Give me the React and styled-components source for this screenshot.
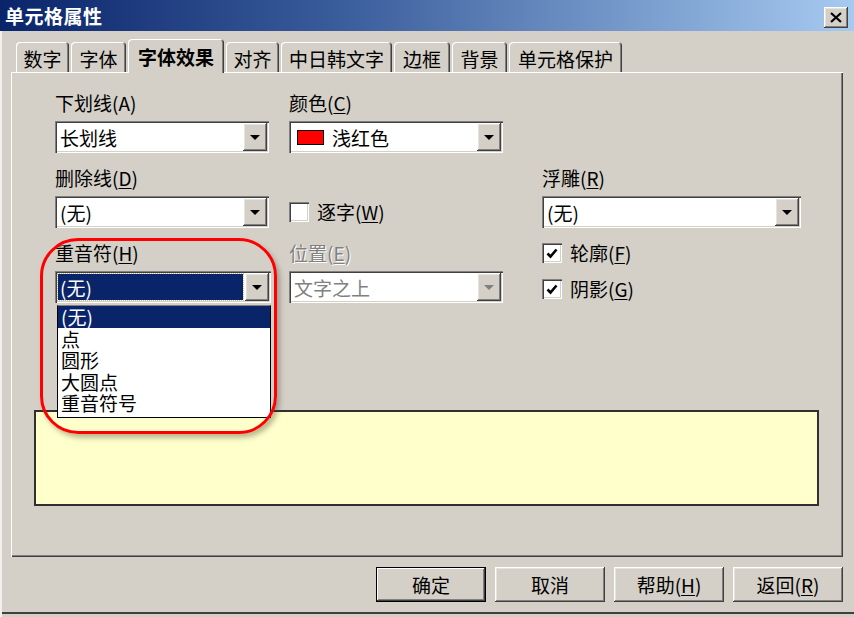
import React from "react";
import styled, { createGlobalStyle } from "styled-components";

const GlobalStyle = createGlobalStyle`
  html, body {
    margin: 0;
    padding: 0;
    background: #d4d0c8;
  }
`;

const FONT = `"Noto Sans CJK SC", "Liberation Sans", sans-serif`;

const raised = `
  box-shadow: inset -1px -1px 0 #404040, inset 1px 1px 0 #ffffff,
    inset -2px -2px 0 #808080, inset 2px 2px 0 #e6e3dc;
`;

const Window = styled.div`
  width: 854px;
  height: 617px;
  box-sizing: border-box;
  background: #d4d0c8;
  display: flex;
  flex-direction: column;
  font-family: ${FONT};
  font-size: 19px;
  color: #000;
  overflow: hidden;
  box-shadow: inset 2px 0 0 #f2f0ec, inset 0 -3px 0 #d4d0c8, inset 0 -5px 0 #404040;
`;

const TitleBar = styled.div`
  height: 31px;
  flex: none;
  display: flex;
  align-items: center;
  justify-content: space-between;
  padding: 0 6px 0 5px;
  background: linear-gradient(to right, #0a246a 0%, #3a5d9c 40%, #a6caf0 100%);
`;

const Title = styled.span`
  color: #fff;
  font-weight: bold;
  font-size: 19px;
  line-height: 1;
  letter-spacing: 0.5px;
`;

const CloseButton = styled.div`
  width: 24px;
  height: 21px;
  margin-top: 4px;
  background: #d4d0c8;
  display: flex;
  align-items: center;
  justify-content: center;
  ${raised}
`;

const Body = styled.div`
  flex: 1;
  display: flex;
  flex-direction: column;
  padding: 0 11px;
`;

const TabRow = styled.div`
  margin-top: 8px;
  height: 33px;
  display: flex;
  align-items: flex-end;
  gap: 2px;
  padding-left: 5px;
`;

const Tab = styled.div`
  position: relative;
  z-index: 1;
  width: ${(p) => p.w}px;
  height: ${(p) => (p.active ? 34 : 30)}px;
  margin-bottom: ${(p) => (p.active ? -1 : 0)}px;
  box-sizing: border-box;
  background: #d4d0c8;
  border-radius: 4px 4px 0 0;
  box-shadow: inset 1px 1px 0 #ffffff, inset -1px 0 0 #404040, inset -2px 0 0 #808080;
  display: flex;
  align-items: center;
  justify-content: center;
  font-weight: ${(p) => (p.active ? "bold" : "normal")};
  line-height: 1;
  padding-top: ${(p) => (p.active ? 0 : 2)}px;
`;

const Panel = styled.div`
  height: 485px;
  box-sizing: border-box;
  padding-top: 21px;
  display: flex;
  flex-direction: column;
  box-shadow: inset 1px 1px 0 #ffffff, inset -1px -1px 0 #404040, inset -2px -2px 0 #808080;
`;

const FormGrid = styled.div`
  margin-left: 44px;
  display: grid;
  grid-template-columns: 214px 233px 259px;
  column-gap: 20px;
  row-gap: 15px;
  align-items: start;
`;

const Field = styled.div`
  position: relative;
  display: flex;
  flex-direction: column;
  gap: 8px;
`;

const Label = styled.div`
  height: 20px;
  line-height: 20px;
  white-space: nowrap;
  color: ${(p) => (p.disabled ? "#808080" : "#000")};
  text-shadow: ${(p) => (p.disabled ? "1px 1px 0 #fff" : "none")};
`;

const Key = styled.span`
  text-decoration: underline;
  text-underline-offset: 2px;
`;

const Select = styled.div`
  width: ${(p) => p.w}px;
  height: 32px;
  box-sizing: border-box;
  padding: 2px 2px 2px 2px;
  background: #fff;
  display: flex;
  align-items: stretch;
  box-shadow: inset 1px 1px 0 #808080, inset 2px 2px 0 #404040,
    inset -1px -1px 0 #ffffff, inset -2px -2px 0 #d4d0c8;
`;

const SelectValue = styled.div`
  flex: 1;
  display: flex;
  align-items: center;
  gap: 8px;
  padding-left: ${(p) => (p.focus ? 2 : 3)}px;
  margin: ${(p) => (p.focus ? "1px 2px 1px 1px" : "0")};
  line-height: 1;
  white-space: nowrap;
  background: ${(p) => (p.focus ? "#0a246a" : "transparent")};
  color: ${(p) => (p.focus ? "#fff" : p.disabled ? "#808080" : "#000")};
  outline: ${(p) => (p.focus ? "1px dotted #c8c0a0" : "none")};
`;

const Swatch = styled.span`
  width: 27px;
  height: 15px;
  box-sizing: border-box;
  background: #ff0000;
  border: 1px solid #000;
  margin-left: 3px;
`;

const ArrowButton = styled.div`
  width: 24px;
  flex: none;
  background: #d4d0c8;
  display: flex;
  align-items: center;
  justify-content: center;
  ${raised}
  &::after {
    content: "";
    border-left: 5px solid transparent;
    border-right: 5px solid transparent;
    border-top: 5px solid ${(p) => (p.disabled ? "#808080" : "#000")};
    margin-top: 1px;
  }
`;

const ListBox = styled.div`
  position: absolute;
  z-index: 2;
  top: calc(100% + 2px);
  left: 2px;
  width: 214px;
  box-sizing: border-box;
  background: #fff;
  border: 1px solid #000;
  border-top-color: #808080;
  padding-bottom: 3px;
`;

const ListItem = styled.div`
  height: 21.5px;
  line-height: 21.5px;
  padding-left: 3px;
  white-space: nowrap;
  background: ${(p) => (p.active ? "#0a246a" : "transparent")};
  color: ${(p) => (p.active ? "#fff" : "#000")};
`;

const Annotation = styled.div`
  position: absolute;
  z-index: 3;
  left: -15px;
  top: -5px;
  width: 237px;
  height: 196px;
  box-sizing: border-box;
  border: 3px solid #ff0000;
  border-radius: 38px;
  box-shadow: 3px 4px 5px rgba(60, 60, 40, 0.35);
  pointer-events: none;
`;

const CheckRow = styled.div`
  display: flex;
  align-items: center;
  gap: 8px;
  height: 20px;
  line-height: 20px;
  white-space: nowrap;
`;

const CheckColumn = styled.div`
  display: flex;
  flex-direction: column;
  gap: 16px;
`;

const CheckSlot = styled.div`
  height: 32px;
  margin-top: 28px;
  display: flex;
  align-items: center;
`;

const Box = styled.div`
  width: 20px;
  height: 20px;
  box-sizing: border-box;
  background: #fff;
  display: flex;
  align-items: center;
  justify-content: center;
  box-shadow: inset 1px 1px 0 #808080, inset 2px 2px 0 #404040,
    inset -1px -1px 0 #ffffff, inset -2px -2px 0 #d4d0c8;
`;

const Preview = styled.div`
  margin: 107px 24px 0 23px;
  height: 96px;
  box-sizing: border-box;
  background: #ffffcc;
  border: 2px solid #303030;
`;

const ButtonRow = styled.div`
  margin-top: 10px;
  display: flex;
  justify-content: flex-end;
  gap: 9px;
`;

const Button = styled.div`
  width: 110px;
  height: 35px;
  box-sizing: border-box;
  background: #d4d0c8;
  display: flex;
  align-items: center;
  justify-content: center;
  line-height: 1;
  ${raised}
  ${(p) =>
    p.primary &&
    `box-shadow: inset 0 0 0 1px #000, inset -2px -2px 0 #404040, inset 2px 2px 0 #ffffff,
      inset -3px -3px 0 #808080;`}
`;

function Checkbox({ checked, children }) {
  return (
    <CheckRow>
      <Box>
        {checked && (
          <svg width="12" height="11" viewBox="0 0 12 11">
            <path d="M1.5 5.5 L4.5 8.5 L10.5 1.5" fill="none" stroke="#000" strokeWidth="2.6" />
          </svg>
        )}
      </Box>
      <span>{children}</span>
    </CheckRow>
  );
}

function Dropdown({ w, children, focus, disabled }) {
  return (
    <Select w={w}>
      <SelectValue focus={focus} disabled={disabled}>
        {children}
      </SelectValue>
      <ArrowButton disabled={disabled} />
    </Select>
  );
}

const tabs = [
  { label: "数字", w: 53 },
  { label: "字体", w: 55 },
  { label: "字体效果", w: 96, active: true },
  { label: "对齐", w: 53 },
  { label: "中日韩文字", w: 111 },
  { label: "边框", w: 56 },
  { label: "背景", w: 55 },
  { label: "单元格保护", w: 113 },
];

const emphasis = ["(无)", "点", "圆形", "大圆点", "重音符号"];

export default function App() {
  return (
    <>
      <GlobalStyle />
      <Window>
        <TitleBar>
          <Title>单元格属性</Title>
          <CloseButton>
            <svg width="12" height="11" viewBox="0 0 12 11">
              <path d="M1 1 L11 10 M11 1 L1 10" stroke="#000" strokeWidth="2.2" />
            </svg>
          </CloseButton>
        </TitleBar>
        <Body>
          <TabRow>
            {tabs.map((t) => (
              <Tab key={t.label} w={t.w} active={t.active}>
                {t.label}
              </Tab>
            ))}
          </TabRow>
          <Panel>
            <FormGrid>
              <Field>
                <Label>下划线(A)</Label>
                <Dropdown w={214}>长划线</Dropdown>
              </Field>
              <Field>
                <Label>
                  颜色(<Key>C</Key>)
                </Label>
                <Dropdown w={214}>
                  <Swatch />
                  浅红色
                </Dropdown>
              </Field>
              <div />

              <Field>
                <Label>
                  删除线(<Key>D</Key>)
                </Label>
                <Dropdown w={214}>(无)</Dropdown>
              </Field>
              <CheckSlot>
                <Checkbox>
                  逐字(<Key>W</Key>)
                </Checkbox>
              </CheckSlot>
              <Field>
                <Label>
                  浮雕(<Key>R</Key>)
                </Label>
                <Dropdown w={259}>(无)</Dropdown>
              </Field>

              <Field>
                <Annotation />
                <Label>
                  重音符(<Key>H</Key>)
                </Label>
                <Dropdown w={216} focus>
                  (无)
                </Dropdown>
                <ListBox>
                  {emphasis.map((e, i) => (
                    <ListItem key={e} active={i === 0}>
                      {e}
                    </ListItem>
                  ))}
                </ListBox>
              </Field>
              <Field>
                <Label disabled>
                  位置(<Key>E</Key>)
                </Label>
                <Dropdown w={214} disabled>
                  文字之上
                </Dropdown>
              </Field>
              <CheckColumn>
                <Checkbox checked>
                  轮廓(<Key>F</Key>)
                </Checkbox>
                <Checkbox checked>
                  阴影(<Key>G</Key>)
                </Checkbox>
              </CheckColumn>
            </FormGrid>
            <Preview />
          </Panel>
          <ButtonRow>
            <Button primary>确定</Button>
            <Button>取消</Button>
            <Button>
              帮助(<Key>H</Key>)
            </Button>
            <Button>
              返回(<Key>R</Key>)
            </Button>
          </ButtonRow>
        </Body>
      </Window>
    </>
  );
}
